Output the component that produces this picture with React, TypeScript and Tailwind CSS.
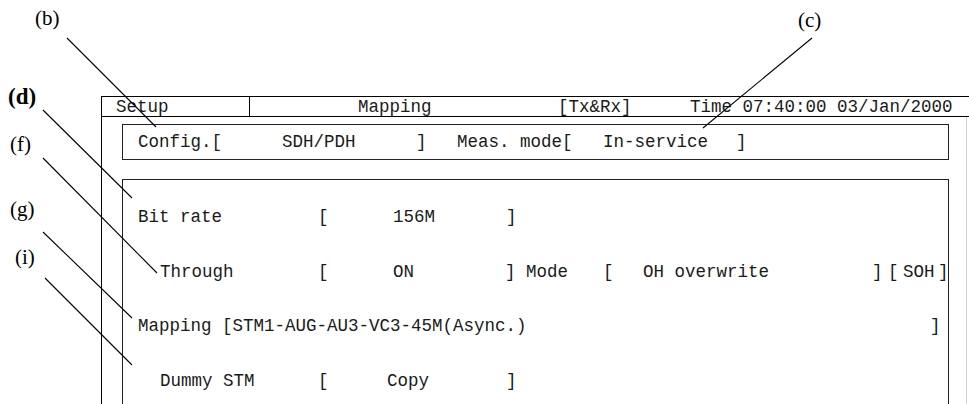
const mono = "font-['Liberation_Mono','DejaVu_Sans_Mono',monospace] text-[17.5px] leading-[18px] text-[#1a1a1a] whitespace-pre [&>span]:shrink-0";

const labels = [
  { text: "(b)", cls: "left-[35px] top-[8px]" },
  { text: "(c)", cls: "left-[798px] top-[10px]" },
  { text: "(f)", cls: "left-[10px] top-[134px]" },
  { text: "(g)", cls: "left-[10px] top-[199px]" },
  { text: "(i)", cls: "left-[15px] top-[247px]" },
];

// leader lines from the callout letters to the fields
const leaders = [
  [67, 38, 156, 127],
  [812, 38, 703, 128],
  [43, 110, 132, 198],
  [43, 158, 157, 273],
  [43, 232, 132, 318],
  [45, 278, 132, 365],
];

const App = () => {
  return (
    <div className="relative w-[969px] h-[404px] overflow-hidden bg-white">
      <div className="ml-[101px] mt-[96px] w-[868px] border-l border-t border-black">
        {/* title bar */}
        <div className={`flex h-[20px] items-center border-b border-black ${mono}`}>
          <div className="w-[148px] h-full flex items-center pl-[14px] border-r border-black">Setup</div>
          <span className="pl-[108px] w-[308px]">Mapping</span>
          <span className="w-[132px]">[Tx&amp;Rx]</span>
          <span>Time 07:40:00 03/Jan/2000</span>
        </div>

        <div className="mr-[2px] border-r border-[#cfcfcf] pl-[20px] pt-[7px] h-[300px]">
          {/* config line */}
          <div className={`flex items-center w-[827px] h-[36px] border border-[#222] pl-[15px] ${mono}`}>
            <span className="w-[144px]">Config.[</span>
            <span className="w-[134px]">SDH/PDH</span>
            <span className="w-[41px]">]</span>
            <span className="w-[146px]">Meas. mode[</span>
            <span className="w-[133px]">In-service</span>
            <span>]</span>
          </div>

          {/* settings */}
          <div className={`mt-[19px] w-[827px] h-[260px] border-l border-t border-r border-[#222] pt-[10px] ${mono}`}>
            <div className="flex items-center h-[54.5px] pl-[15px] [&>span]:shrink-0">
              <span className="w-[180px]">Bit rate</span>
              <span className="w-[75px]">[</span>
              <span className="w-[113px]">156M</span>
              <span>]</span>
            </div>
            <div className="flex items-center h-[54.5px] pl-[37px] [&>span]:shrink-0">
              <span className="w-[158px]">Through</span>
              <span className="w-[75px]">[</span>
              <span className="w-[112px]">ON</span>
              <span className="w-[98px]">] Mode</span>
              <span className="w-[40px]">[</span>
              <span className="w-[229px]">OH overwrite</span>
              <span className="w-[16px]">]</span>
              <span className="w-[15px]">[</span>
              <span className="w-[35px]">SOH</span>
              <span>]</span>
            </div>
            <div className="flex items-center h-[54.5px] pl-[15px] [&>span]:shrink-0">
              <span className="w-[84px]">Mapping</span>
              <span className="w-[708px]">[STM1-AUG-AU3-VC3-45M(Async.)</span>
              <span>]</span>
            </div>
            <div className="flex items-center h-[54.5px] pl-[37px] [&>span]:shrink-0">
              <span className="w-[158px]">Dummy STM</span>
              <span className="w-[69px]">[</span>
              <span className="w-[119px]">Copy</span>
              <span>]</span>
            </div>
          </div>
        </div>
      </div>

      {/* callouts */}
      <svg className="absolute inset-0 pointer-events-none" width="969" height="404">
        {leaders.map(([x1, y1, x2, y2], i) => (
          <line key={i} x1={x1} y1={y1} x2={x2} y2={y2} stroke="#000" strokeWidth="1.1" />
        ))}
      </svg>
      {labels.map((l) => (
        <span
          key={l.text}
          className={`absolute ${l.cls} font-['Liberation_Serif',serif] text-[21px] leading-none text-black`}
        >
          {l.text}
        </span>
      ))}
      <span className="absolute left-[8px] top-[85px] font-['Liberation_Serif',serif] font-bold text-[23px] leading-none text-black">
        (d)
      </span>
    </div>
  );
};

export default App;
